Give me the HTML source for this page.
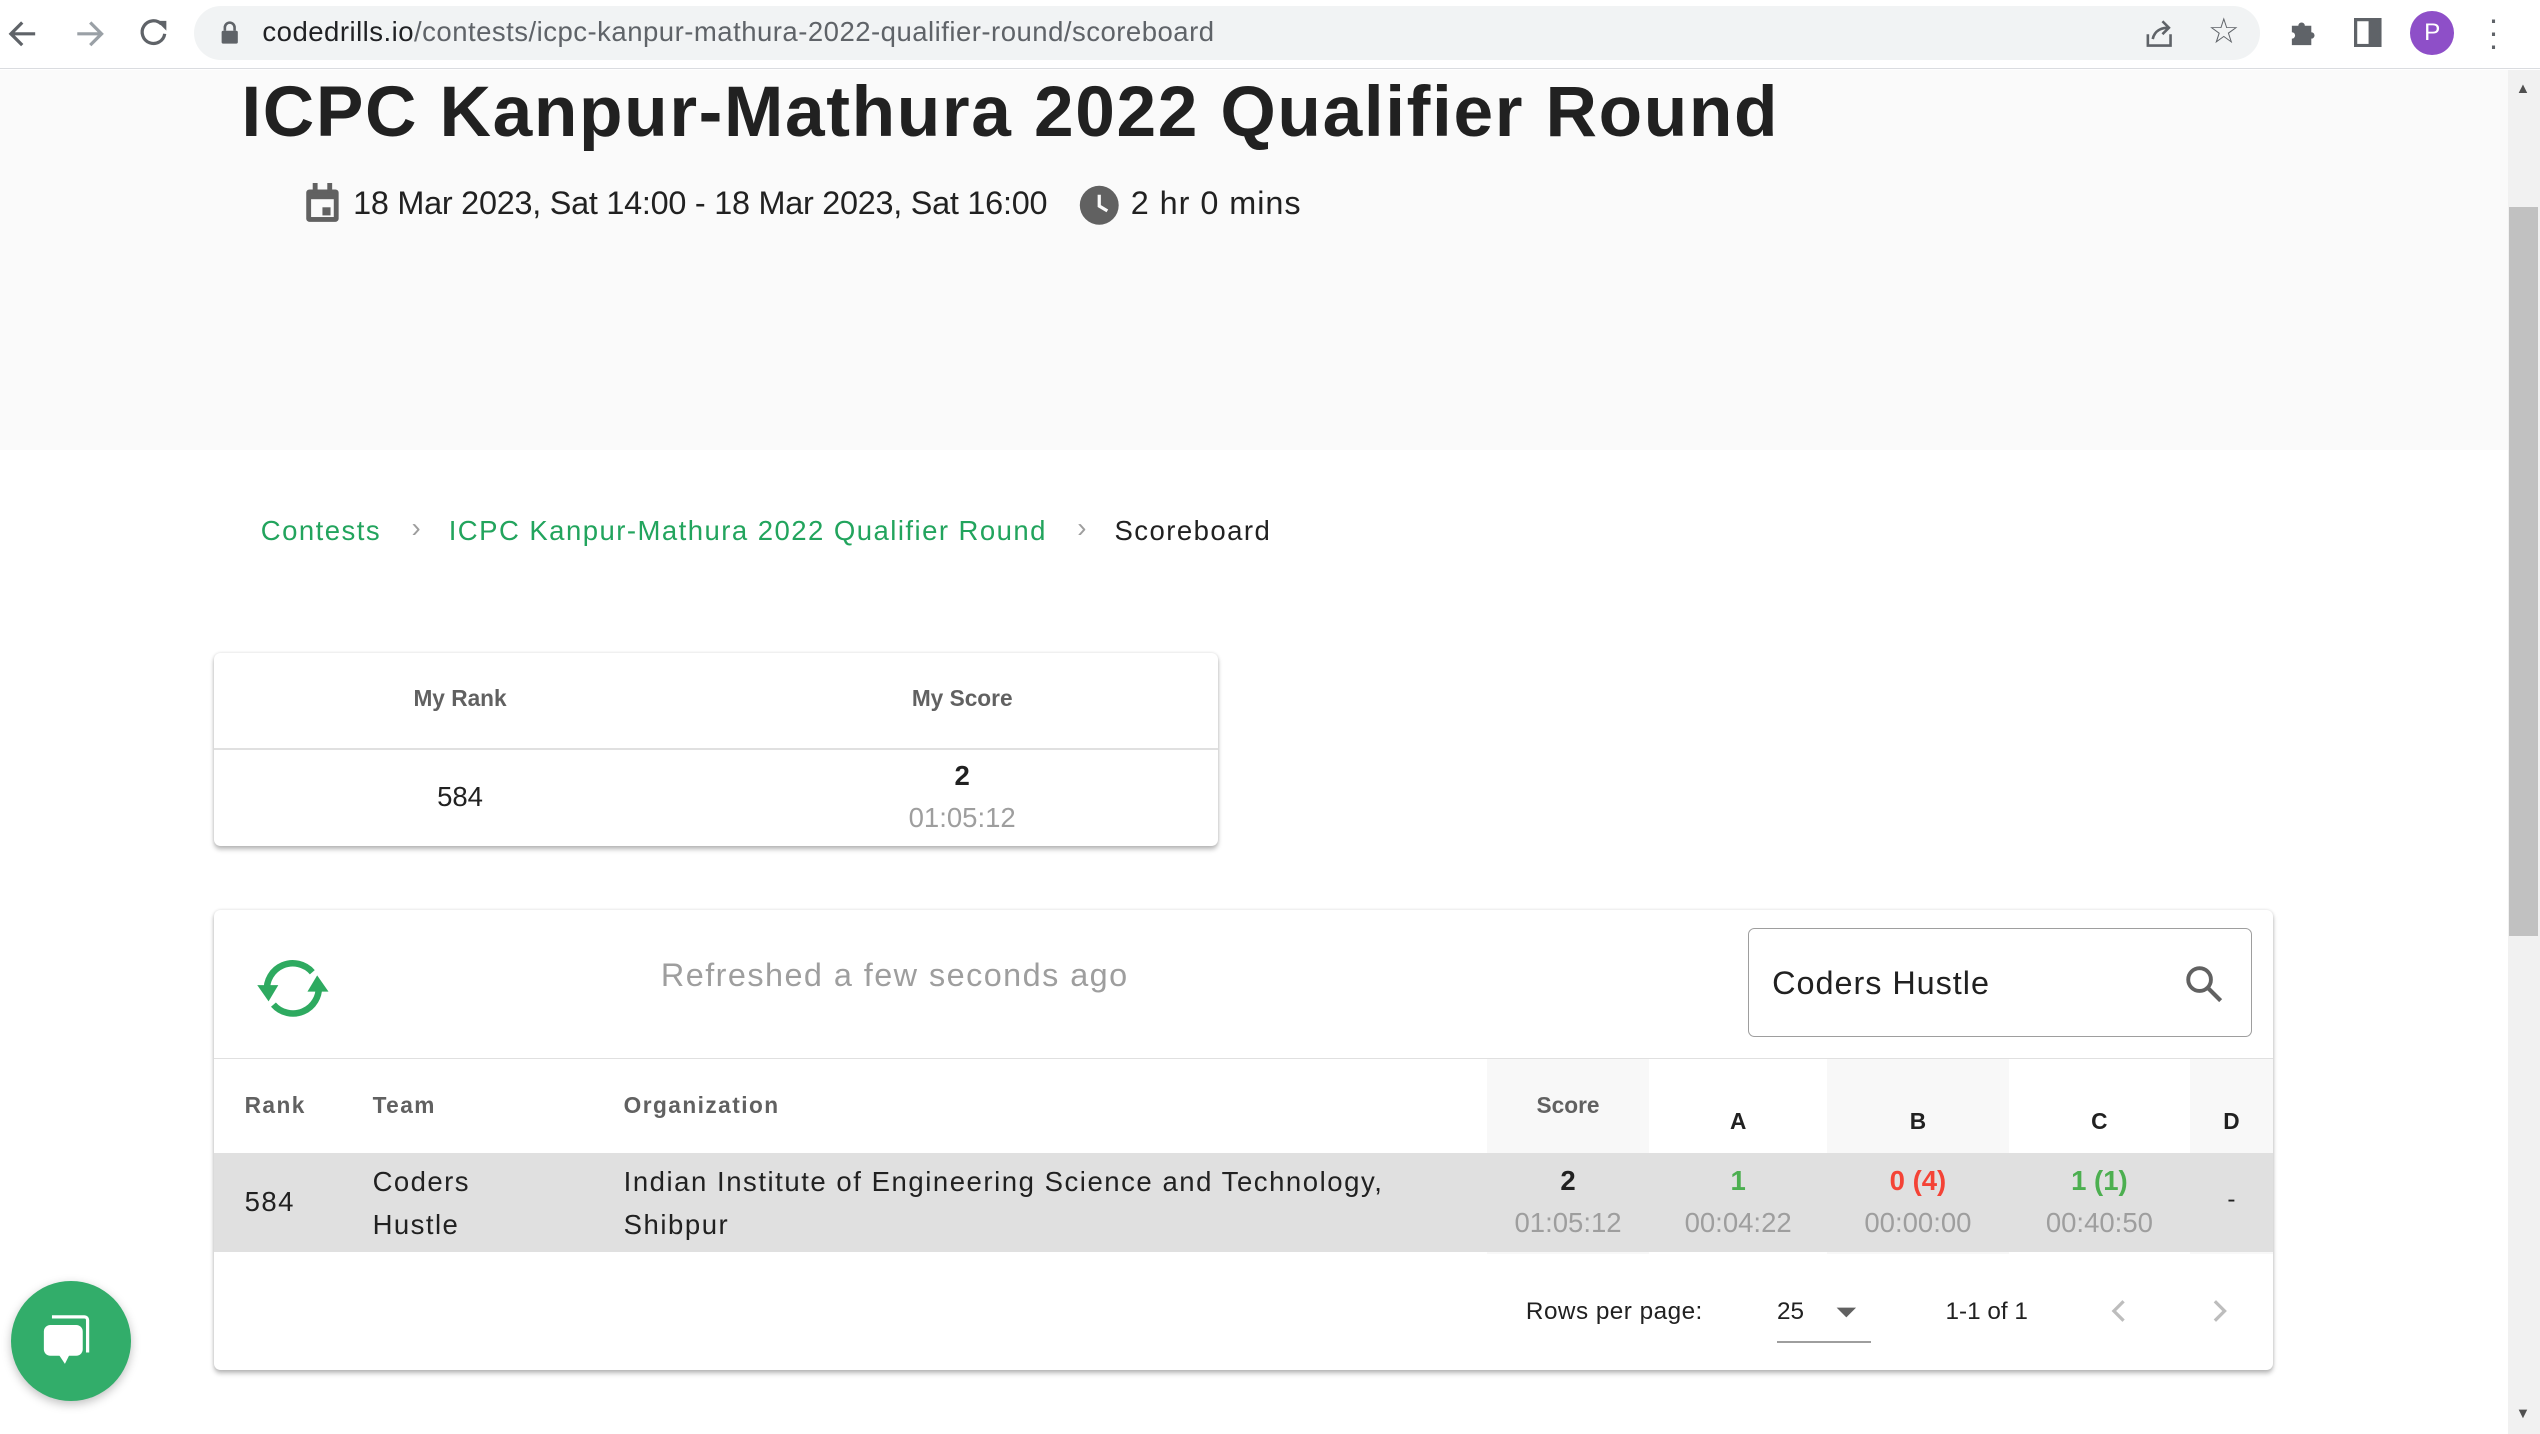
<!DOCTYPE html>
<html><head><meta charset="utf-8"><style>
html,body{margin:0;padding:0;overflow:hidden}
body{width:2540px;height:1434px;background:#fff;font-family:"Liberation Sans",sans-serif;}
#w{zoom:1.6199;width:1568px;height:885px;position:relative;overflow:hidden;background:#fff}
.a{position:absolute;white-space:nowrap}
.g{color:#22a45d}
.card{position:absolute;background:#fff;border-radius:4px;box-shadow:0 2px 3px rgba(0,0,0,.25),0 0 2px rgba(0,0,0,.12)}
.c{text-align:center}
.ls{letter-spacing:0.9px}
</style></head><body><div id="w">
<div class="a" style="left:0;top:0;width:1568px;height:42px;background:#fff;border-bottom:1px solid #dadce0"></div>
<svg class="a" style="left:4px;top:10px" width="110" height="22" viewBox="0 0 110 22">
<path d="M18 11H4M10 4L3 11l7 7" stroke="#5f6368" stroke-width="2" fill="none"/>
<path d="M44 11h14M52 4l7 7-7 7" stroke="#9aa0a6" stroke-width="2" fill="none"/>
<path d="M96 5a7 7 0 1 0 2 6" stroke="#5f6368" stroke-width="2" fill="none"/><path d="M93 3h6v6z" fill="#5f6368"/>
</svg>
<div class="a" style="left:120px;top:4px;width:1275px;height:33px;background:#f1f3f4;border-radius:17px"></div>
<svg class="a" style="left:136px;top:13px" width="12" height="15"><rect x="1" y="6" width="10" height="8" rx="1" fill="#5f6368"/><path d="M3 6V4a3 3 0 0 1 6 0v2" stroke="#5f6368" stroke-width="1.6" fill="none"/></svg>
<div class="a" style="left:162px;top:10px;font-size:17px;color:#202124;letter-spacing:0.3px">codedrills.io<span style="color:#5f6368">/contests/icpc-kanpur-mathura-2022-qualifier-round/scoreboard</span></div>
<svg class="a" style="left:1323px;top:11px" width="20" height="20"><path d="M3 10v7h14v-7" stroke="#5f6368" stroke-width="1.6" fill="none"/><path d="M6 13c1-5 5-7 10-7M12 2l4 4-4 4" stroke="#5f6368" stroke-width="1.6" fill="none"/></svg>
<div class="a" style="left:1363px;top:7px;font-size:22px;color:#5f6368">☆</div>
<svg class="a" style="left:1412px;top:10px" width="20" height="20"><path d="M3 6h4a2 2 0 0 1 4 0h4v4a2 2 0 0 1 0 4v4H3v-4a2 2 0 0 0 0-4z" fill="#5f6368"/></svg>
<svg class="a" style="left:1453px;top:11px" width="18" height="18"><rect x="1" y="1" width="15" height="16" fill="none" stroke="#5f6368" stroke-width="2"/><rect x="9" y="1" width="7" height="16" fill="#5f6368"/></svg>
<div class="a" style="left:1488px;top:7px;width:27px;height:27px;border-radius:50%;background:#8e4fc8;color:#fff;font-size:15px;text-align:center;line-height:27px">P</div>
<div class="a" style="left:1536px;top:8px;font-size:20px;color:#5f6368;line-height:8px">·<br>·<br>·</div>
<div class="a" style="left:0;top:43px;width:1548px;height:235px;background:#fafafa"></div>
<div class="a" style="left:149px;top:44px;font-size:44px;font-weight:bold;color:#212121;letter-spacing:1px">ICPC Kanpur-Mathura 2022 Qualifier Round</div>
<svg class="a" style="left:187px;top:113px" width="24" height="26"><rect x="2" y="4" width="20" height="20" rx="2" fill="#616161"/><rect x="5" y="10" width="14" height="11" fill="#fafafa"/><rect x="6" y="0" width="3" height="6" fill="#616161"/><rect x="15" y="0" width="3" height="6" fill="#616161"/><rect x="12" y="15" width="5" height="5" fill="#616161"/></svg>
<div class="a" style="left:218px;top:114px;font-size:20px;color:#212121;letter-spacing:-0.15px">18 Mar 2023, Sat 14:00 - 18 Mar 2023, Sat 16:00</div>
<svg class="a" style="left:666px;top:114px" width="25" height="25"><circle cx="12.5" cy="12.5" r="12" fill="#616161"/><path d="M12.5 6v7l5 3" stroke="#fafafa" stroke-width="2" fill="none"/></svg>
<div class="a" style="left:698px;top:114px;font-size:20px;color:#212121;letter-spacing:0.6px">2 hr 0 mins</div>
<div class="a" style="left:1548px;top:43px;width:20px;height:842px;background:#f1f1f1"></div>
<div class="a" style="left:1549px;top:128px;width:18px;height:450px;background:#c1c1c1"></div>
<div class="a" style="left:1553px;top:50px;font-size:9px;color:#505050">▲</div>
<div class="a" style="left:1553px;top:868px;font-size:9px;color:#505050">▼</div>
<div class="a g ls" style="left:161px;top:318px;font-size:17px">Contests</div>
<div class="a" style="left:254px;top:316px;font-size:17px;color:#9e9e9e">›</div>
<div class="a g ls" style="left:277px;top:318px;font-size:17px">ICPC Kanpur-Mathura 2022 Qualifier Round</div>
<div class="a" style="left:665px;top:316px;font-size:17px;color:#9e9e9e">›</div>
<div class="a ls" style="left:688px;top:318px;font-size:17px;color:#212121">Scoreboard</div>
<div class="card" style="left:132px;top:403px;width:620px;height:119px">
<div class="a" style="left:0;top:59px;width:620px;height:1px;background:#e0e0e0"></div>
<div class="a c" style="left:0;top:20px;width:304px;font-size:14px;font-weight:bold;color:#616161">My Rank</div>
<div class="a c" style="left:310px;top:20px;width:304px;font-size:14px;font-weight:bold;color:#616161">My Score</div>
<div class="a c" style="left:0;top:79px;width:304px;font-size:17px;color:#212121">584</div>
<div class="a c" style="left:310px;top:66px;width:304px;font-size:17px;font-weight:bold;color:#212121">2</div>
<div class="a c" style="left:310px;top:92px;width:304px;font-size:17px;color:#9e9e9e">01:05:12</div>
</div>
<div class="card" style="left:132px;top:562px;width:1271px;height:284px;overflow:hidden">
<svg class="a" style="left:25px;top:28px" width="48" height="40" viewBox="0 0 48 40"><path d="M8 22A16 16 0 0 1 36 10" stroke="#2eaa60" stroke-width="4" fill="none"/><path d="M2 18l7 10 6-10z" fill="#2eaa60"/><path d="M40 18A16 16 0 0 1 12 30" stroke="#2eaa60" stroke-width="4" fill="none"/><path d="M46 22l-7-10-6 10z" fill="#2eaa60"/></svg>
<div class="a" style="left:276px;top:29px;font-size:20px;color:#9e9e9e;letter-spacing:0.9px">Refreshed a few seconds ago</div>
<div class="a" style="left:947px;top:11px;width:310px;height:66px;border:1px solid #9e9e9e;border-radius:4px"></div>
<div class="a" style="left:962px;top:34px;font-size:20px;color:#212121;letter-spacing:0.6px">Coders Hustle</div>
<svg class="a" style="left:1217px;top:34px" width="24" height="24"><circle cx="9" cy="9" r="7" stroke="#616161" stroke-width="2.4" fill="none"/><path d="M14 14l8 8" stroke="#616161" stroke-width="2.6"/></svg>
<div class="a" style="left:0;top:91px;width:1271px;height:1px;background:#e0e0e0"></div>
<div class="a" style="left:786px;top:92px;width:100px;height:120px;background:#f8f8f8"></div>
<div class="a" style="left:996px;top:92px;width:112px;height:120px;background:#f8f8f8"></div>
<div class="a" style="left:1220px;top:92px;width:51px;height:120px;background:#f8f8f8"></div>
<div class="a" style="left:0;top:150px;width:1271px;height:61px;background:#e0e0e0"></div>
<div class="a ls" style="left:19px;top:112px;font-size:14px;font-weight:bold;color:#616161">Rank</div>
<div class="a ls" style="left:98px;top:112px;font-size:14px;font-weight:bold;color:#616161">Team</div>
<div class="a ls" style="left:253px;top:112px;font-size:14px;font-weight:bold;color:#616161">Organization</div>
<div class="a c" style="left:786px;top:112px;width:100px;font-size:14px;font-weight:bold;color:#616161">Score</div>
<div class="a c" style="left:886px;top:122px;width:110px;font-size:14px;font-weight:bold;color:#212121">A</div>
<div class="a c" style="left:996px;top:122px;width:112px;font-size:14px;font-weight:bold;color:#212121">B</div>
<div class="a c" style="left:1108px;top:122px;width:112px;font-size:14px;font-weight:bold;color:#212121">C</div>
<div class="a c" style="left:1220px;top:122px;width:51px;font-size:14px;font-weight:bold;color:#212121">D</div>
<div class="a ls" style="left:19px;top:170px;font-size:17px;color:#212121">584</div>
<div class="a ls" style="left:98px;top:155px;font-size:17px;color:#212121;line-height:26px">Coders<br>Hustle</div>
<div class="a" style="left:253px;top:155px;font-size:17px;color:#212121;line-height:26px;letter-spacing:0.95px">Indian Institute of Engineering Science and Technology,<br>Shibpur</div>
<div class="a c" style="left:786px;top:154px;width:100px;font-size:17px;line-height:26px"><b style="color:#212121">2</b><br><span style="color:#9e9e9e">01:05:12</span></div>
<div class="a c" style="left:886px;top:154px;width:110px;font-size:17px;line-height:26px"><b style="color:#4caf50">1</b><br><span style="color:#9e9e9e">00:04:22</span></div>
<div class="a c" style="left:996px;top:154px;width:112px;font-size:17px;line-height:26px"><b style="color:#f44336">0 (4)</b><br><span style="color:#9e9e9e">00:00:00</span></div>
<div class="a c" style="left:1108px;top:154px;width:112px;font-size:17px;line-height:26px"><b style="color:#4caf50">1 (1)</b><br><span style="color:#9e9e9e">00:40:50</span></div>
<div class="a c" style="left:1220px;top:170px;width:51px;font-size:15px;color:#212121">-</div>
<div class="a" style="left:810px;top:239px;font-size:15px;color:#212121;letter-spacing:0.3px">Rows per page:</div>
<div class="a" style="left:965px;top:239px;font-size:15px;color:#212121">25</div>
<svg class="a" style="left:1001px;top:244px" width="14" height="8"><path d="M1 1h12l-6 6z" fill="#616161"/></svg>
<div class="a" style="left:965px;top:266px;width:58px;height:1px;background:#9e9e9e"></div>
<div class="a" style="left:1069px;top:239px;font-size:15px;color:#212121">1-1 of 1</div>
<svg class="a" style="left:1170px;top:239px" width="12" height="16"><path d="M9 2L3 8l6 6" stroke="#bdbdbd" stroke-width="2" fill="none"/></svg>
<svg class="a" style="left:1232px;top:239px" width="12" height="16"><path d="M3 2l6 6-6 6" stroke="#bdbdbd" stroke-width="2" fill="none"/></svg>
</div>
<div class="a" style="left:7px;top:791px;width:74px;height:74px;border-radius:50%;background:#32ad6a;box-shadow:0 2px 6px rgba(0,0,0,.25)"></div>
<svg class="a" style="left:24px;top:810px" width="40" height="36"><path d="M8 3h20a2 2 0 0 1 2 2v20" stroke="#fff" stroke-width="2" fill="none"/><rect x="3" y="8" width="24" height="19" rx="4" fill="#fff"/><path d="M12 26l4 6 3-6z" fill="#fff"/></svg>
</div></body></html>
